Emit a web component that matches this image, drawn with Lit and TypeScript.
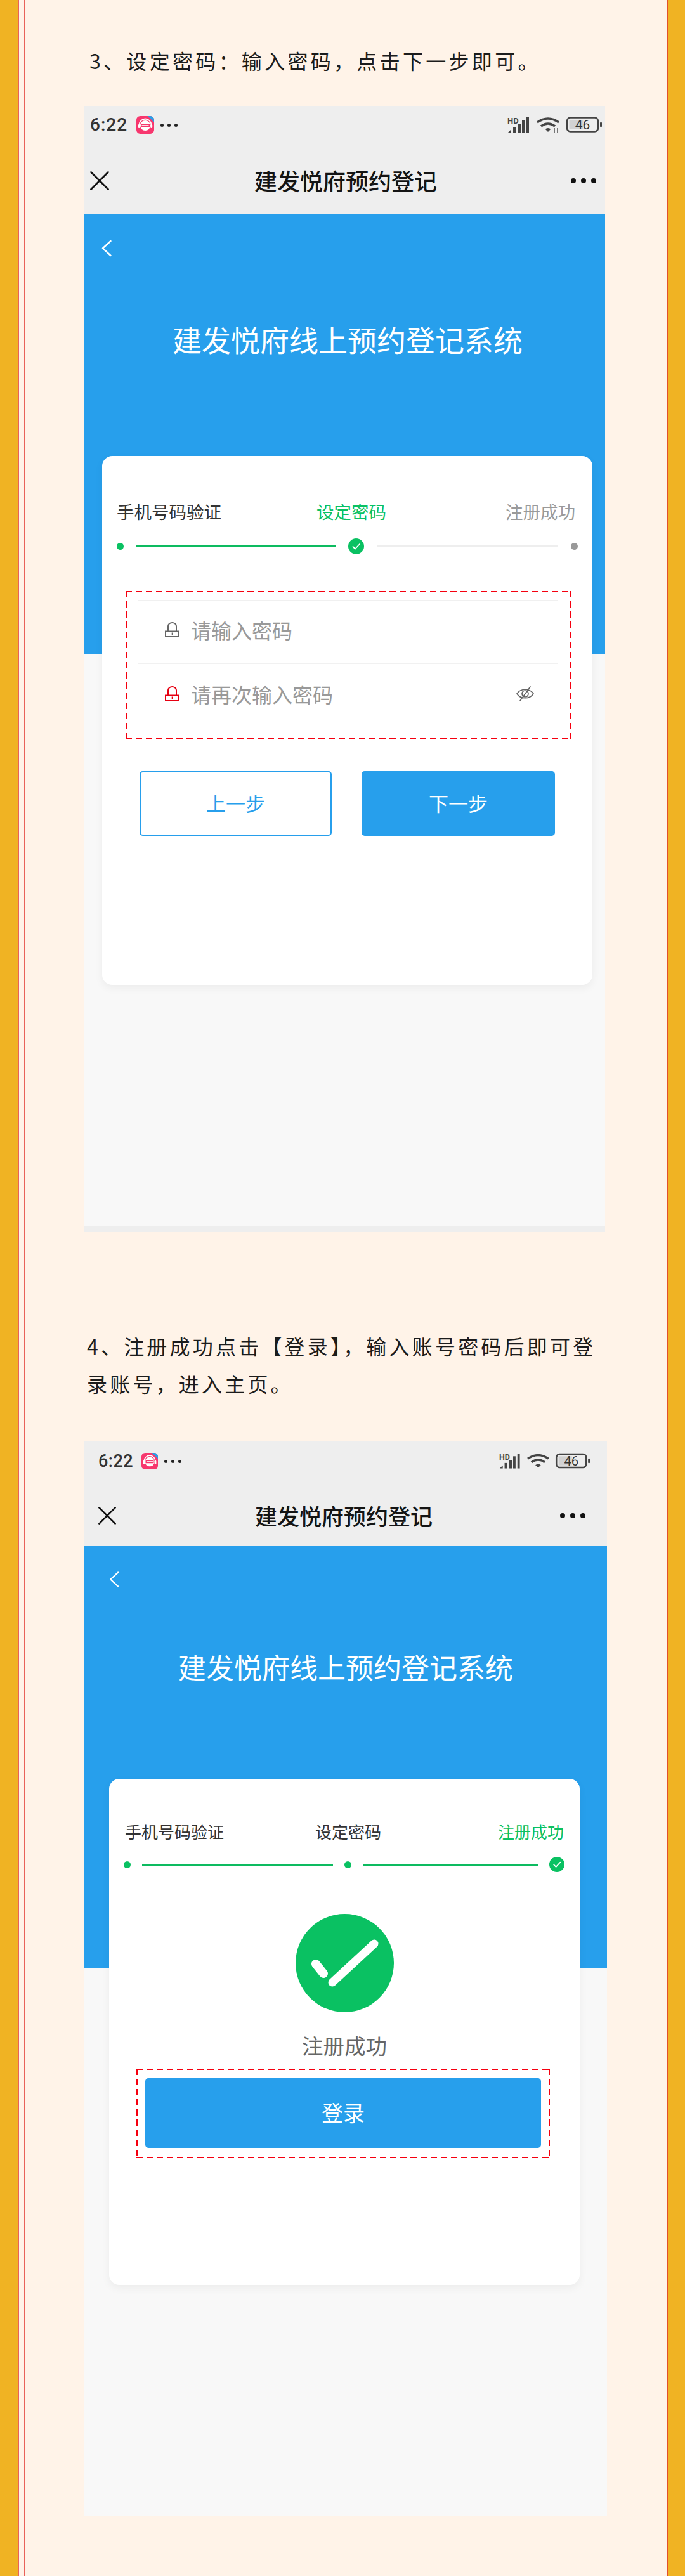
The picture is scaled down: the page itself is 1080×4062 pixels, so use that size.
import { LitElement, html, css, svg } from "lit";
import { customElement } from "lit/decorators.js";

const closeIcon = html`<svg class="close" viewBox="0 0 30 30" fill="none" stroke="#111" stroke-width="2.8" stroke-linecap="round"><path d="M1.5 1.5 28.5 28.5M28.5 1.5 1.5 28.5"/></svg>`;
const chevron = html`<svg class="chev" viewBox="0 0 16 26" fill="none" stroke="#fff" stroke-width="2.4" stroke-linecap="round" stroke-linejoin="round"><path d="M14.5 1.5 2 13l12.5 11.5"/></svg>`;
const appIcon = html`<svg class="app" viewBox="0 0 28 28">
  <rect width="28" height="28" rx="6" fill="#f7376e"/>
  <path d="M18 0h4a6 6 0 0 1 6 6v4z" fill="#2a9fe8"/>
  <circle cx="14" cy="15" r="8" fill="#fff"/>
  <path d="M4.5 16V14a9.5 9.5 0 0 1 19 0v2" fill="none" stroke="#fff" stroke-width="1.8"/>
  <rect x="2.8" y="13" width="3" height="6" rx="1.5" fill="#fff"/><rect x="22.2" y="13" width="3" height="6" rx="1.5" fill="#fff"/>
  <rect x="7" y="12.5" width="14" height="5" fill="#f7376e"/>
  <rect x="8.5" y="14.2" width="11" height="1.5" fill="#fff"/>
</svg>`;
const statusIcons = (arrows: boolean) => html`<svg class="sys" viewBox="0 0 152 26">
  <text x="2" y="11" font-family="Roboto, sans-serif" font-size="13" font-weight="700" fill="#444">HD</text>
  <g fill="#444">
    <path d="M3 25 8 20v5z"/><rect x="11" y="16" width="4" height="9"/><rect x="18" y="11" width="5" height="14"/><rect x="25" y="5" width="4" height="20"/><rect x="32" y="1" width="4" height="24"/>
  </g>
  <g fill="none" stroke="#444" stroke-width="3.6">
    <path d="M49 9Q66-3 83 9"/><path d="M55 15Q66 7 77 15"/>
  </g>
  <path d="M61.5 19.5Q66 16.5 70.5 19.5L66 24z" fill="#444"/>
  ${arrows ? svg`<path d="M76 18v7M81 18v7" stroke="#444" stroke-width="1.4"/>` : ""}
  <rect x="96" y="1.5" width="49" height="22" rx="5.5" fill="none" stroke="#444" stroke-width="2.6"/>
  <rect x="99.5" y="5" width="22" height="15" fill="#d2d2d2"/>
  <text x="120.5" y="20" text-anchor="middle" font-family="Roboto, sans-serif" font-size="21" fill="#333">46</text>
  <rect x="148" y="8.5" width="3" height="8" rx="1.5" fill="#444"/>
</svg>`;
const check = html`<svg class="check" viewBox="0 0 25 25"><circle cx="12.5" cy="12.5" r="12.5" fill="#0ac162"/><path d="M7.5 13l3.5 3.5 7-7.5" fill="none" stroke="#fff" stroke-width="1.8" stroke-linecap="round" stroke-linejoin="round"/></svg>`;
const lock = (red: boolean) => html`<svg class="lock ${red ? "red" : ""}" viewBox="0 0 23 24" fill="none" stroke="currentColor" stroke-width="2">
  <path d="M5 15V6.5a6.5 5.5 0 0 1 13 0V15"/><rect x="1" y="14.5" width="21" height="8.5"/>
  <path d="M11.5 16.5v3.5" stroke-width="1.6"/>
</svg>`;
const eye = html`<svg class="eye" viewBox="0 0 30 24" fill="none" stroke="#666" stroke-width="1.7" stroke-linecap="round">
  <path d="M2 12C8 3 22 3 28 12C22 21 8 21 2 12z"/><circle cx="15" cy="12" r="5"/><path d="M23 1 7 23"/>
</svg>`;

@customElement("app-root")
export class AppRoot extends LitElement {
  static styles = css`
    :host { display: block; font-family: "Noto Sans CJK SC", "Noto Sans", sans-serif; }
    * { box-sizing: border-box; }
    .page { display: flex; width: 1080px; height: 4062px; background: #fff3e8; overflow: hidden; }
    .rail-l, .rail-r { width: 48px; flex: none; }
    .rail-l { background: linear-gradient(90deg, #f0b323 29px, #e8625a 29px 30px, #fff3e8 30px 38px, #e8625a 38px 39px, #fff3e8 39px 47px, #e8625a 47px 48px); }
    .rail-r { width: 46px; background: linear-gradient(90deg, #e8625a 0 1px, #fff3e8 1px 9px, #c9736c 9px 10px, #fff3e8 10px 18px, #e2502c 18px 19px, #f0b323 19px); }
    .main { width: 986px; flex: none; }

    .para { color: #1c1c1c; font-size: 32px; font-weight: 400; margin: 0; white-space: nowrap; }
    .para1 { margin: 65px 0 42px 93px; line-height: 60px; letter-spacing: 4.3px; }
    .para2 { margin: 151px 0 62px 89px; line-height: 59px; letter-spacing: 4.2px; }

    .phone { margin-left: 85px; }
    .p1 { width: 821px; border-bottom: 9px solid #eeeeee; }
    .p2 { width: 824px; border-bottom: 1px solid #f0eeee; }

    .status { display: flex; align-items: center; background: #eeeeee; }
    .p1 .status { height: 60px; padding: 0 4px 0 9px; }
    .p2 .status { height: 62px; padding: 0 26px 0 22px; }
    .time { font-family: Roboto, sans-serif; font-weight: 500; color: #333; font-size: 28px; letter-spacing: 1px; line-height: 1; }
    .p2 .time { font-size: 27px; letter-spacing: 0.5px; }
    .app { width: 28px; height: 28px; margin-left: 14px; }
    .p2 .app { width: 26px; height: 26px; margin-left: 13px; }
    .mini { display: flex; gap: 6px; margin-left: 10px; }
    .mini i { width: 5px; height: 5px; border-radius: 50%; background: #222; }
    .sys { width: 152px; height: 26px; margin-left: auto; }
    .p2 .sys { width: 146px; }

    .nav { display: flex; align-items: center; background: #eeeeee; }
    .p1 .nav { height: 110px; padding: 6px 14px 0 9px; }
    .p2 .nav { height: 103px; padding: 6px 34px 0 22px; }
    .close { width: 30px; height: 30px; flex: none; }
    .p2 .close { width: 28px; height: 28px; }
    .title { font-weight: 500; color: #141414; line-height: 1.2; white-space: nowrap; }
    .p1 .title { font-size: 36px; margin-left: 229px; }
    .p2 .title { font-size: 35px; margin-left: 219px; }
    .more { display: flex; gap: 8px; margin-left: auto; }
    .more i { width: 8px; height: 8px; border-radius: 50%; background: #111; }

    .screen { display: flow-root; }
    .p1 .screen { height: 1596px; background: linear-gradient(#279fec 694px, #f8f8f8 694px); }
    .p2 .screen { height: 1529px; background: linear-gradient(#279fec 665px, #f8f8f8 665px); }
    .chev { display: block; }
    .p1 .chev { width: 16px; height: 27px; margin: 41px 0 0 27px; }
    .p2 .chev { width: 16px; height: 25px; margin: 40px 0 0 39px; }
    .hero { color: #fff; text-align: center; line-height: 60px; white-space: nowrap; }
    .p1 .hero { font-size: 46px; margin-top: 99px; padding-left: 9px; }
    .p2 .hero { font-size: 44px; margin-top: 95px; }

    .card { background: #fff; border-radius: 16px; box-shadow: 0 5px 14px rgba(0,0,0,.05); display: flow-root; }
    .p1 .card { width: 773px; height: 834px; margin: 155px 0 0 28px; padding: 70px 27px 0 23px; }
    .p2 .card { width: 742px; height: 798px; margin: 147px 0 0 39px; padding: 66px 25px 0 25px; }

    .labels { display: flex; line-height: 34px; white-space: nowrap; color: #333; }
    .p1 .labels { font-size: 27.5px; }
    .p2 .labels { font-size: 26px; }
    .labels .last { margin-left: auto; }
    .p1 .labels .mid { margin-left: 150px; }
    .p2 .labels .mid { margin-left: 144px; }
    .green { color: #0ac162; }
    .muted { color: #9a9a9a; }

    .steps { display: grid; align-items: center; }
    .p1 .steps { grid-template-columns: 11px 314px 25px 286px 11px; column-gap: 20px; height: 26px; margin-top: 25px; }
    .p2 .steps { grid-template-columns: 11px 301px 11px 276px 24px; column-gap: 18px; height: 24px; margin: 23px 0 0 -2.5px; }
    .dot { width: 11px; height: 11px; border-radius: 50%; background: #0ac162; }
    .dot.off { background: #999; }
    .bar { height: 3px; background: #0dbb60; }
    .bar.off { background: #eeeeee; }
    .check { display: block; width: 100%; }

    .dash {
      background:
        repeating-linear-gradient(90deg, #f5000f 0 10px, transparent 10px 16px) top / 100% 2px no-repeat,
        repeating-linear-gradient(90deg, #f5000f 0 10px, transparent 10px 16px) bottom / 100% 2px no-repeat,
        repeating-linear-gradient(180deg, #f5000f 0 10px, transparent 10px 16px) left / 2px 100% no-repeat,
        repeating-linear-gradient(180deg, #f5000f 0 10px, transparent 10px 16px) right / 2px 100% no-repeat;
    }
    .p1 .dash { width: 702px; height: 233px; margin: 58px 0 0 14px; padding: 14px 20px 0; }
    .rows { border-top: 1px solid #f0f0f0; }
    .row { display: flex; align-items: center; height: 100px; padding: 0 37px 6px 42px; border-bottom: 2px solid #f1f1f1; font-size: 32px; color: #999; }
    .row:last-child { border-bottom-width: 1px; }
    .lock { width: 23px; height: 24px; flex: none; margin-right: 18px; color: #666; }
    .lock.red { color: #e60012; }
    .eye { width: 30px; height: 24px; margin-left: auto; }

    .btns { display: grid; grid-template-columns: 303px 305px; column-gap: 47px; margin: 51px 0 0 36px; }
    .btn { height: 102px; border-radius: 5px; border: 2px solid #279fec; display: flex; align-items: center; justify-content: center; font-size: 31px; color: #279fec; padding-bottom: 3px; }
    .btn.solid { background: #279fec; color: #fff; }

    .done { display: flex; flex-direction: column; align-items: center; }
    .big { width: 155px; height: 155px; margin-top: 66px; display: block; }
    .done-text { font-size: 33.5px; line-height: 44px; color: #666; margin-top: 30px; }
    .p2 .dash { width: 652px; height: 141px; margin: 15px 0 0 18px; padding: 15px 14px; }
    .login { height: 110px; border-radius: 5px; background: #279fec; color: #fff; font-size: 34px; display: flex; align-items: center; justify-content: center; padding-bottom: 4px; }
  `;

  private head(arrows: boolean) {
    return html`
      <div class="status">
        <span class="time">6:22</span>${appIcon}
        <span class="mini"><i></i><i></i><i></i></span>
        ${statusIcons(arrows)}
      </div>
      <div class="nav">${closeIcon}<span class="title">建发悦府预约登记</span><span class="more"><i></i><i></i><i></i></span></div>`;
  }

  render() {
    return html`<div class="page">
      <div class="rail-l"></div>
      <div class="main">
        <p class="para para1">3、设定密码&#xFF1A;输入密码&#xFF0C;点击下一步即可。</p>
        <section class="phone p1">
          ${this.head(true)}
          <div class="screen">
            ${chevron}
            <div class="hero">建发悦府线上预约登记系统</div>
            <div class="card">
              <div class="labels"><span>手机号码验证</span><span class="mid green">设定密码</span><span class="last muted">注册成功</span></div>
              <div class="steps"><span class="dot"></span><span class="bar"></span>${check}<span class="bar off"></span><span class="dot off"></span></div>
              <div class="dash"><div class="rows">
                <div class="row">${lock(false)}<span>请输入密码</span></div>
                <div class="row">${lock(true)}<span>请再次输入密码</span>${eye}</div>
              </div></div>
              <div class="btns"><div class="btn">上一步</div><div class="btn solid">下一步</div></div>
            </div>
          </div>
        </section>
        <p class="para para2">4、注册成功点击【登录】&#xFF0C;输入账号密码后即可登<br />录账号&#xFF0C;进入主页。</p>
        <section class="phone p2">
          ${this.head(false)}
          <div class="screen">
            ${chevron}
            <div class="hero">建发悦府线上预约登记系统</div>
            <div class="card">
              <div class="labels"><span>手机号码验证</span><span class="mid">设定密码</span><span class="last green">注册成功</span></div>
              <div class="steps"><span class="dot"></span><span class="bar"></span><span class="dot"></span><span class="bar"></span>${check}</div>
              <div class="done">
                <svg class="big" viewBox="0 0 155 155"><circle cx="77.5" cy="77.5" r="77.5" fill="#0ac162"/>
                  <path d="M124 47 58 108" stroke="#fff" stroke-width="13" stroke-linecap="round" fill="none"/>
                  <path d="M32 79 44 94" stroke="#fff" stroke-width="14" stroke-linecap="round" fill="none"/></svg>
                <div class="done-text">注册成功</div>
              </div>
              <div class="dash"><div class="login">登录</div></div>
            </div>
          </div>
        </section>
      </div>
      <div class="rail-r"></div>
    </div>`;
  }
}
